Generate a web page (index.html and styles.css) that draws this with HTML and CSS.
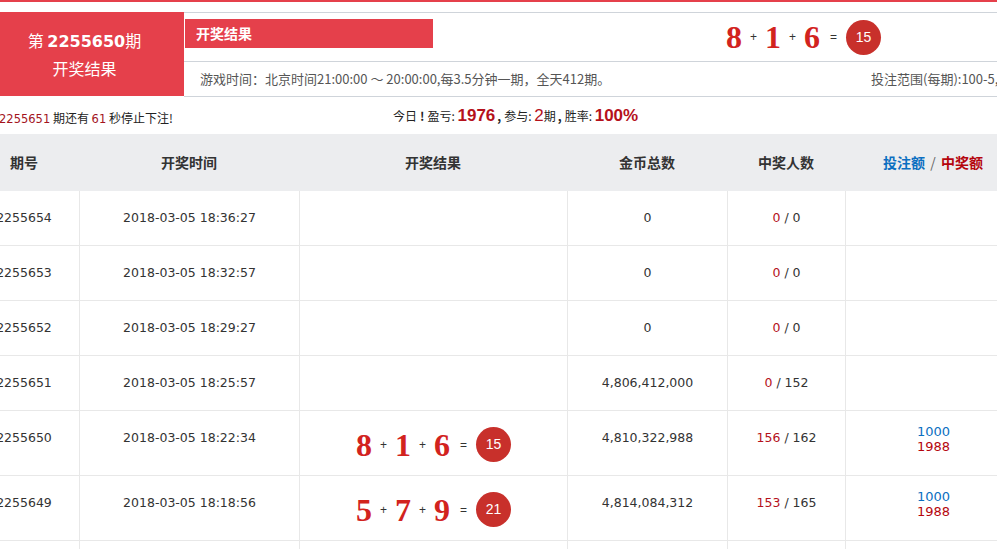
FILE: index.html
```html
<!DOCTYPE html>
<html lang="zh-CN">
<head>
<meta charset="utf-8">
<title>开奖结果</title>
<link rel="stylesheet" href="styles.css">
</head>
<body>
<div class="topbar"></div>
<div class="page">
  <header class="hd">
    <div class="hd-issue">
      <div class="hd-no">第 <b>2255650</b>期</div>
      <div class="hd-lbl">开奖结果</div>
    </div>
    <div class="hd-main">
      <div class="hd-top">
        <div class="tab">开奖结果</div>
        <div class="res">
          <span class="d">8</span><span class="op">+</span><span class="d">1</span><span class="op">+</span><span class="d">6</span><span class="eq">=</span><span class="sum">15</span>
        </div>
      </div>
      <div class="hd-info">
        <span class="info-l">游戏时间：北京时间21:00:00 ～ 20:00:00,每3.5分钟一期，全天412期。</span>
        <span class="info-r">投注范围(每期):100-5,000,000</span>
      </div>
    </div>
  </header>

  <div class="status">
    <div class="st-l"><span class="dr">2255651</span> 期还有 <span class="dr">61</span> 秒停止下注!</div>
    <div class="st-c">今日<b class="ex">!</b>盈亏: <b class="bn">1976</b><span class="cm">,</span>参与: <span class="bn2">2</span>期<span class="cm">,</span>胜率: <b class="bn">100%</b></div>
  </div>

  <table class="tbl">
    <colgroup>
      <col class="c1"><col class="c2"><col class="c3"><col class="c4"><col class="c5"><col class="c6">
    </colgroup>
    <thead>
      <tr>
        <th>期号</th><th>开奖时间</th><th>开奖结果</th><th>金币总数</th><th>中奖人数</th>
        <th><span class="blue">投注额</span> <span class="sl">/</span> <span class="red">中奖额</span></th>
      </tr>
    </thead>
    <tbody>
      <tr>
        <td>2255654</td><td>2018-03-05 18:36:27</td><td></td><td>0</td>
        <td><span class="win">0</span> / 0</td><td></td>
      </tr>
      <tr>
        <td>2255653</td><td>2018-03-05 18:32:57</td><td></td><td>0</td>
        <td><span class="win">0</span> / 0</td><td></td>
      </tr>
      <tr>
        <td>2255652</td><td>2018-03-05 18:29:27</td><td></td><td>0</td>
        <td><span class="win">0</span> / 0</td><td></td>
      </tr>
      <tr>
        <td>2255651</td><td>2018-03-05 18:25:57</td><td></td><td>4,806,412,000</td>
        <td><span class="win">0</span> / 152</td><td></td>
      </tr>
      <tr>
        <td>2255650</td><td>2018-03-05 18:22:34</td>
        <td class="rc"><div class="res"><span class="d">8</span><span class="op">+</span><span class="d">1</span><span class="op">+</span><span class="d">6</span><span class="eq">=</span><span class="sum">15</span></div></td>
        <td>4,810,322,988</td>
        <td><span class="win">156</span> / 162</td>
        <td class="bc"><div class="blue">1000</div><div class="red">1988</div></td>
      </tr>
      <tr>
        <td>2255649</td><td>2018-03-05 18:18:56</td>
        <td class="rc"><div class="res"><span class="d">5</span><span class="op">+</span><span class="d">7</span><span class="op">+</span><span class="d">9</span><span class="eq">=</span><span class="sum">21</span></div></td>
        <td>4,814,084,312</td>
        <td><span class="win">153</span> / 165</td>
        <td class="bc"><div class="blue">1000</div><div class="red">1988</div></td>
      </tr>
      <tr>
        <td>2255648</td><td>2018-03-05 18:15:27</td><td></td><td></td><td></td><td></td>
      </tr>
    </tbody>
  </table>
</div>
</body>
</html>
```
FILE: styles.css
```css
html, body {
  margin: 0;
  padding: 0;
  background: #fff;
}
body {
  width: 997px;
  height: 549px;
  overflow: hidden;
  font-family: "DejaVu Sans", "Noto Sans CJK SC", sans-serif;
  font-size: 13px;
  color: #333;
}
.topbar {
  height: 2px;
  background: #e5404b;
  margin-bottom: 10px;
}
.page {
  margin-left: -31px;
  width: 1052px;
}

/* header */
.hd {
  display: flex;
  height: 84px;
}
.hd-issue {
  flex: 0 0 auto;
  width: 199px;
  padding-left: 16px;
  background: #e5404b;
  color: #fff;
  display: flex;
  flex-direction: column;
  justify-content: center;
  align-items: center;
  font-family: "Noto Sans CJK SC", sans-serif;
  font-size: 16px;
  line-height: 26px;
}
.hd-no b {
  font-family: "DejaVu Sans", sans-serif;
  font-size: 16px;
}
.hd-main {
  flex: 1 1 auto;
  min-width: 0;
  border-top: 1px solid #cfd4da;
}
.hd-top {
  height: 48px;
  border-bottom: 1px solid #cfd4da;
  display: flex;
  align-items: flex-start;
}
.tab {
  flex: 0 0 auto;
  margin-top: 6px;
  margin-left: 1px;
  width: 237px;
  height: 29px;
  padding-left: 11px;
  background: #e5404b;
  color: #fff;
  font-family: "Noto Sans CJK SC", sans-serif;
  font-weight: bold;
  font-size: 14px;
  line-height: 29px;
}
.hd-top .res {
  margin-left: 293px;
  height: 48px;
}
.hd-info {
  height: 34px;
  border-bottom: 1px solid #cfd4da;
  display: grid;
  grid-template-columns: 687px auto;
  line-height: 34px;
  color: #555;
  font-family: "Noto Sans CJK SC", sans-serif;
  font-size: 13px;
  white-space: nowrap;
  overflow: hidden;
}
.info-l {
  padding-left: 16px;
}

/* lottery result */
.res {
  display: flex;
  align-items: center;
  justify-content: center;
}
.d {
  font-family: "Liberation Serif", serif;
  font-weight: bold;
  font-size: 32px;
  line-height: 34px;
  color: #d2231e;
}
.op, .eq {
  font-family: "Liberation Sans", sans-serif;
  font-size: 12px;
  color: #333;
  margin: 0 8px;
}
.eq {
  margin: 0 9px 0 10px;
}
.sum {
  width: 35px;
  height: 35px;
  border-radius: 50%;
  background: #c8302b;
  color: #fff;
  font-family: "Liberation Sans", sans-serif;
  font-size: 14px;
  line-height: 35px;
  text-align: center;
}

/* status */
.status {
  height: 37px;
  display: grid;
  grid-template-columns: 424px auto;
  align-items: center;
  padding-top: 1px;
}
.st-l {
  padding-left: 30px;
  font-family: "Noto Sans CJK SC", sans-serif;
  font-size: 12px;
  color: #222;
  margin-top: 3px;
}
.dr {
  font-family: "DejaVu Sans", sans-serif;
  font-size: 11.5px;
  color: #a3141c;
}
.st-c {
  font-family: "Noto Sans CJK SC", sans-serif;
  font-size: 12px;
  color: #222;
}
.ex {
  margin: 0 3px;
}
.bn {
  font-family: "Liberation Sans", sans-serif;
  font-size: 17px;
  color: #b5111b;
}
.bn2 {
  font-family: "Liberation Sans", sans-serif;
  font-size: 17px;
  color: #b5111b;
}
.cm {
  font-weight: bold;
  margin: 0 3px 0 2px;
}

/* table */
.tbl {
  width: 1052px;
  table-layout: fixed;
  border-collapse: separate;
  border-spacing: 0;
  margin-top: 0;
}
.c1 { width: 110px; }
.c2 { width: 220px; }
.c3 { width: 268px; }
.c4 { width: 160px; }
.c5 { width: 118px; }
.c6 { width: 176px; }
.tbl th {
  height: 55px;
  padding: 0 0 2px;
  background: #ecedef;
  font-family: "Noto Sans CJK SC", sans-serif;
  font-size: 14px;
  font-weight: bold;
  color: #333;
  text-align: center;
}
.tbl td {
  padding: 19px 0 19px;
  line-height: 16px;
  text-align: center;
  vertical-align: top;
  border-bottom: 1px solid #e8e8e8;
  border-left: 1px solid #e8e8e8;
  font-size: 12.5px;
  color: #333;
  white-space: nowrap;
}
.tbl td:first-child {
  border-left: none;
}
.tbl td.rc {
  padding: 11px 0 8px;
}
.tbl td.rc .res {
  height: 45px;
}
.tbl td.bc {
  padding-top: 13px;
  line-height: 15px;
  font-size: 13px;
  font-family: "DejaVu Sans", sans-serif;
}
.blue {
  color: #0b6fc1;
}
.red {
  color: #b5050d;
}
.sl {
  color: #666;
  font-weight: normal;
  margin: 0 2px;
}
.win {
  color: #b5111b;
}
```
